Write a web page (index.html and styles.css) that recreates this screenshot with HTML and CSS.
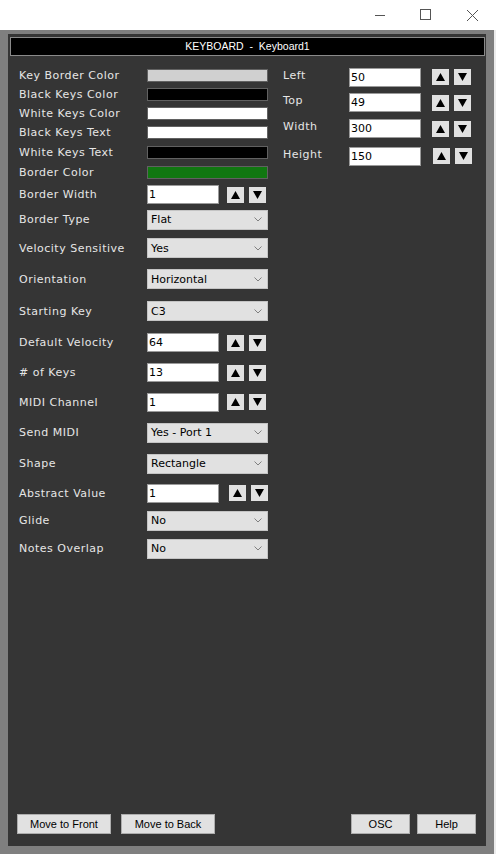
FILE: index.html
```html
<!DOCTYPE html>
<html lang="en">
<head>
      <meta charset="UTF-8">
      <meta name="viewport" content="width=device-width, initial-scale=1.0">
      <title>KEYBOARD - Keyboard1</title>
      <link rel="stylesheet" href="styles.css">
</head>
<body>
      <div class="titlebar">
            <div class="cap">
                  <svg width="12" height="12" viewBox="0 0 12 12"><line x1="1" y1="6.5" x2="11" y2="6.5" stroke="#555" stroke-width="1"/></svg>
            </div>
            <div class="cap">
                  <svg width="12" height="12" viewBox="0 0 12 12"><rect x="0.5" y="0.5" width="10" height="10" fill="none" stroke="#555" stroke-width="1"/></svg>
            </div>
            <div class="cap">
                  <svg width="13" height="13" viewBox="0 0 13 13"><path d="M1 1 L12 12 M12 1 L1 12" stroke="#555" stroke-width="1"/></svg>
            </div>
      </div>

      <div class="frame">
            <div class="panel">
                  <div class="panel-head">KEYBOARD  -  Keyboard1</div>

                  <div class="panel-body">
                        <div class="form-left">
                              <div class="row r19"><span class="label">Key Border Color</span><div class="swatch sw-light"></div></div>
                              <div class="row r19"><span class="label">Black Keys Color</span><div class="swatch sw-black"></div></div>
                              <div class="row r19"><span class="label">White Keys Color</span><div class="swatch sw-white"></div></div>
                              <div class="row r19"><span class="label">Black Keys Text</span><div class="swatch sw-white"></div></div>
                              <div class="row r20"><span class="label">White Keys Text</span><div class="swatch sw-black"></div></div>
                              <div class="row r21"><span class="label">Border Color</span><div class="swatch sw-green"></div></div>
                              <div class="row r23"><span class="label">Border Width</span>
                                    <div class="field">1</div>
                                    <div class="spin"><button class="arrow"><svg width="9" height="8" viewBox="0 0 9 8"><polygon points="0,8 9,8 4.5,0" fill="#000"/></svg></button><button class="arrow"><svg width="9" height="8" viewBox="0 0 9 8"><polygon points="0,0 9,0 4.5,8" fill="#000"/></svg></button></div>
                              </div>
                              <div class="row r27"><span class="label">Border Type</span><div class="select">Flat<svg width="8" height="5" viewBox="0 0 8 5"><polyline points="0.5,0.5 4,4 7.5,0.5" fill="none" stroke="#808080" stroke-width="1"/></svg></div></div>
                              <div class="row r30"><span class="label">Velocity Sensitive</span><div class="select">Yes<svg width="8" height="5" viewBox="0 0 8 5"><polyline points="0.5,0.5 4,4 7.5,0.5" fill="none" stroke="#808080" stroke-width="1"/></svg></div></div>
                              <div class="row r32"><span class="label">Orientation</span><div class="select">Horizontal<svg width="8" height="5" viewBox="0 0 8 5"><polyline points="0.5,0.5 4,4 7.5,0.5" fill="none" stroke="#808080" stroke-width="1"/></svg></div></div>
                              <div class="row r32"><span class="label">Starting Key</span><div class="select">C3<svg width="8" height="5" viewBox="0 0 8 5"><polyline points="0.5,0.5 4,4 7.5,0.5" fill="none" stroke="#808080" stroke-width="1"/></svg></div></div>
                              <div class="row r31"><span class="label">Default Velocity</span>
                                    <div class="field">64</div>
                                    <div class="spin"><button class="arrow"><svg width="9" height="8" viewBox="0 0 9 8"><polygon points="0,8 9,8 4.5,0" fill="#000"/></svg></button><button class="arrow"><svg width="9" height="8" viewBox="0 0 9 8"><polygon points="0,0 9,0 4.5,8" fill="#000"/></svg></button></div>
                              </div>
                              <div class="row r29"><span class="label"># of Keys</span>
                                    <div class="field">13</div>
                                    <div class="spin"><button class="arrow"><svg width="9" height="8" viewBox="0 0 9 8"><polygon points="0,8 9,8 4.5,0" fill="#000"/></svg></button><button class="arrow"><svg width="9" height="8" viewBox="0 0 9 8"><polygon points="0,0 9,0 4.5,8" fill="#000"/></svg></button></div>
                              </div>
                              <div class="row r30"><span class="label">MIDI Channel</span>
                                    <div class="field">1</div>
                                    <div class="spin"><button class="arrow"><svg width="9" height="8" viewBox="0 0 9 8"><polygon points="0,8 9,8 4.5,0" fill="#000"/></svg></button><button class="arrow"><svg width="9" height="8" viewBox="0 0 9 8"><polygon points="0,0 9,0 4.5,8" fill="#000"/></svg></button></div>
                              </div>
                              <div class="row r31"><span class="label">Send MIDI</span><div class="select">Yes - Port 1<svg width="8" height="5" viewBox="0 0 8 5"><polyline points="0.5,0.5 4,4 7.5,0.5" fill="none" stroke="#808080" stroke-width="1"/></svg></div></div>
                              <div class="row r31"><span class="label">Shape</span><div class="select">Rectangle<svg width="8" height="5" viewBox="0 0 8 5"><polyline points="0.5,0.5 4,4 7.5,0.5" fill="none" stroke="#808080" stroke-width="1"/></svg></div></div>
                              <div class="row r28"><span class="label">Abstract Value</span>
                                    <div class="field">1</div>
                                    <div class="spin shift"><button class="arrow"><svg width="9" height="8" viewBox="0 0 9 8"><polygon points="0,8 9,8 4.5,0" fill="#000"/></svg></button><button class="arrow"><svg width="9" height="8" viewBox="0 0 9 8"><polygon points="0,0 9,0 4.5,8" fill="#000"/></svg></button></div>
                              </div>
                              <div class="row r27"><span class="label">Glide</span><div class="select">No<svg width="8" height="5" viewBox="0 0 8 5"><polyline points="0.5,0.5 4,4 7.5,0.5" fill="none" stroke="#808080" stroke-width="1"/></svg></div></div>
                              <div class="row r29"><span class="label">Notes Overlap</span><div class="select">No<svg width="8" height="5" viewBox="0 0 8 5"><polyline points="0.5,0.5 4,4 7.5,0.5" fill="none" stroke="#808080" stroke-width="1"/></svg></div></div>
                        </div>

                        <div class="form-right">
                              <div class="row r26"><span class="label label-r">Left</span>
                                    <div class="field">50</div>
                                    <div class="spin"><button class="arrow"><svg width="9" height="8" viewBox="0 0 9 8"><polygon points="0,8 9,8 4.5,0" fill="#000"/></svg></button><button class="arrow"><svg width="9" height="8" viewBox="0 0 9 8"><polygon points="0,0 9,0 4.5,8" fill="#000"/></svg></button></div>
                              </div>
                              <div class="row r25"><span class="label label-r">Top</span>
                                    <div class="field">49</div>
                                    <div class="spin"><button class="arrow"><svg width="9" height="8" viewBox="0 0 9 8"><polygon points="0,8 9,8 4.5,0" fill="#000"/></svg></button><button class="arrow"><svg width="9" height="8" viewBox="0 0 9 8"><polygon points="0,0 9,0 4.5,8" fill="#000"/></svg></button></div>
                              </div>
                              <div class="row r27"><span class="label label-r">Width</span>
                                    <div class="field">300</div>
                                    <div class="spin"><button class="arrow"><svg width="9" height="8" viewBox="0 0 9 8"><polygon points="0,8 9,8 4.5,0" fill="#000"/></svg></button><button class="arrow"><svg width="9" height="8" viewBox="0 0 9 8"><polygon points="0,0 9,0 4.5,8" fill="#000"/></svg></button></div>
                              </div>
                              <div class="row r28"><span class="label label-r">Height</span>
                                    <div class="field">150</div>
                                    <div class="spin shift"><button class="arrow"><svg width="9" height="8" viewBox="0 0 9 8"><polygon points="0,8 9,8 4.5,0" fill="#000"/></svg></button><button class="arrow"><svg width="9" height="8" viewBox="0 0 9 8"><polygon points="0,0 9,0 4.5,8" fill="#000"/></svg></button></div>
                              </div>
                        </div>
                  </div>

                  <div class="panel-foot">
                        <div class="foot-group">
                              <button class="btn btn-wide">Move to Front</button>
                              <button class="btn btn-wide">Move to Back</button>
                        </div>
                        <div class="foot-group foot-right">
                              <button class="btn">OSC</button>
                              <button class="btn">Help</button>
                        </div>
                  </div>
            </div>
      </div>
</body>
</html>
```

FILE: styles.css
```css
*{
      box-sizing: border-box;
}

body {
      margin: 0;
      width: 496px;
      height: 854px;
      overflow: hidden;
      font-family: "DejaVu Sans", Verdana, sans-serif;
      background: #fff;
}

/* window caption */
.titlebar {
      height: 30px;
      background: #fff;
      display: flex;
      justify-content: flex-end;
      padding-right: 1px;
}
.titlebar .cap {
      width: 46px;
      height: 30px;
      display: flex;
      align-items: center;
      justify-content: center;
}

.frame {
      height: 824px;
      background: #7f7f7f;
      padding: 4px 8px 8px 8px;
      border-right: 2px solid #ececec;
}

.panel {
      height: 812px;
      background: #353535;
      display: flex;
      flex-direction: column;
}
.panel-head {
      margin: 3px 1px 0 2px;
      height: 19px;
      background: #000;
      border: 1px solid #8a8a8a;
      color: #fff;
      font-family: "Liberation Sans", Arial, sans-serif;
      font-size: 10.5px;
      line-height: 17px;
      text-align: center;
      white-space: pre;
}

.panel-body {
      display: flex;
      align-items: flex-start;
      padding-left: 11px;
}
.form-left {
      width: 249px;
      margin-top: 10px;
}
.form-right {
      margin-left: 15px;
      margin-top: 8px;
}

.row {
      display: flex;
      align-items: center;
}
.r19 { height: 19px; }
.r20 { height: 20px; }
.r21 { height: 21px; }
.r23 { height: 23px; }
.r25 { height: 25px; }
.r26 { height: 26px; }
.r27 { height: 27px; }
.r28 { height: 28px; }
.r29 { height: 29px; }
.r30 { height: 30px; }
.r31 { height: 31px; }
.r32 { height: 32px; }

.label {
      width: 128px;
      flex-shrink: 0;
      color: #e6e6e6;
      font-size: 11px;
      letter-spacing: 0.5px;
      white-space: nowrap;
}
.label-r {
      width: 66px;
      margin-top: -4px;
}

.swatch {
      width: 121px;
      height: 13px;
      border: 1px solid #616161;
}
.sw-light { background: #d0d0d0; }
.sw-black { background: #000; }
.sw-white { background: #fff; }
.sw-green { background: #117711; }

.field {
      width: 72px;
      height: 19px;
      background: #fff;
      border: 1px solid #9a9a9a;
      font-size: 11px;
      line-height: 17px;
      padding-left: 1px;
      color: #000;
}

.spin {
      display: flex;
      gap: 5px;
      margin-left: 8px;
}
.form-right .spin {
      margin-left: 11px;
}
.spin.shift {
      margin-left: 10px;
}
.form-right .spin.shift {
      margin-left: 12px;
}
.arrow {
      appearance: none;
      width: 17px;
      height: 16px;
      padding: 0;
      border: none;
      background: #e1e1e1;
      display: flex;
      align-items: center;
      justify-content: center;
}

.select {
      width: 121px;
      height: 20px;
      background: #e1e1e1;
      border: 1px solid #c4c4c4;
      font-size: 11px;
      color: #000;
      padding: 0 5px 0 3px;
      display: flex;
      align-items: center;
      justify-content: space-between;
}

.panel-foot {
      margin-top: auto;
      display: flex;
      justify-content: space-between;
      padding: 0 10px 12px 9px;
}
.foot-group {
      display: flex;
      gap: 10px;
}
.foot-right {
      gap: 7px;
}
.btn {
      appearance: none;
      width: 59px;
      height: 20px;
      padding: 0;
      background: #e1e1e1;
      border: 1px solid #adadad;
      color: #000;
      font-family: "Liberation Sans", Arial, sans-serif;
      font-size: 11px;
}
.btn-wide {
      width: 94px;
}
```
